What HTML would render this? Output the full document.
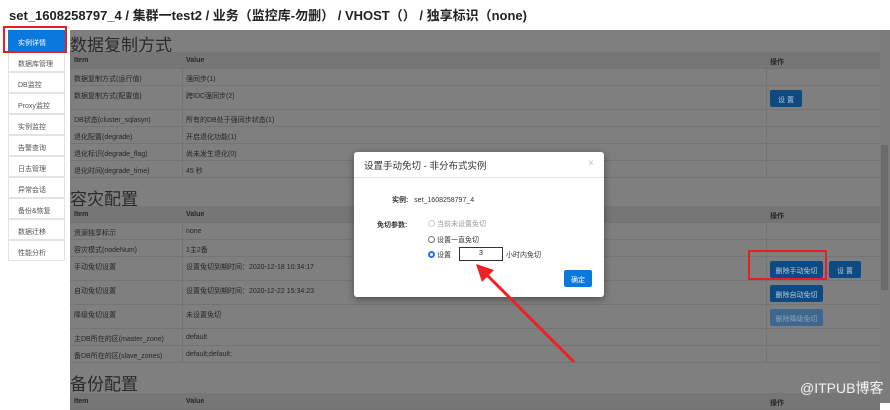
<!DOCTYPE html><html><head><meta charset="utf-8"><style>
*{margin:0;padding:0;box-sizing:border-box}
body{width:890px;height:403px;overflow:hidden;background:#fff;font-family:"Liberation Sans","Noto Sans CJK SC",sans-serif;position:relative;color:#222}
.a{position:absolute}
.t{font-size:13px;font-weight:bold;left:9px;top:5px;color:#222}
.side div{position:absolute;left:8px;width:57px;height:21px;border:1px solid #e3e3e3;background:#fff;font-size:7px;color:#555;padding:7px 0 0 9px}
.main{left:70px;top:30px;width:810px;height:373px;background:#7f7f7f}
.h{font-size:17px;color:#2a2a2a;left:0}
.row{position:absolute;left:0;width:810px;border-bottom:1px solid #747474;font-size:7px;color:#262626}
.row span{position:absolute;top:5px}
.row .c1{left:4px}.row .c2{left:116px}.row .c3{left:700px}
.vl{position:absolute;top:0;bottom:0;width:1px;background:#747474}
.hd{background:#767676;font-weight:bold}
.btn{position:absolute;background:#0e4a82;color:#bcc8d6;font-size:7px;text-align:center;border-radius:2px;height:17px;padding-top:5px}
.sb{left:880px;top:30px;width:10px;height:373px;background:#7c7c7c}
</style></head><body>
<div class="a t">set_1608258797_4 / 集群一test2 / 业务（监控库-勿删） / VHOST（） / 独享标识（none)</div>
<div class="side">
<div style="top:30px;background:#0a78dd;color:#fff;border-color:#0a78dd">实例详情</div>
<div style="top:51px">数据库管理</div><div style="top:72px">DB监控</div><div style="top:93px">Proxy监控</div><div style="top:114px">实例监控</div><div style="top:135px">告警查询</div><div style="top:156px">日志管理</div><div style="top:177px">异常会话</div><div style="top:198px">备份&amp;恢复</div><div style="top:219px">数据迁移</div><div style="top:240px">性能分析</div>
</div>
<div class="a" style="left:3px;top:26px;width:64px;height:27px;border:2px solid #e62020"></div>
<div class="a main">
<div class="a h" style="top:1px">数据复制方式</div>
<div class="row hd" style="top:22px;height:17px"><span class="c1">Item</span><span class="c2">Value</span><span class="c3">操作</span></div>
<div class="row" style="top:39px;height:17px"><span class="c1">数据复制方式(运行值)</span><span class="c2">强同步(1)</span></div>
<div class="row" style="top:56px;height:24px"><span class="c1">数据复制方式(配置值)</span><span class="c2">跨IDC强同步(2)</span></div>
<div class="row" style="top:80px;height:17px"><span class="c1">DB状态(cluster_sqlasyn)</span><span class="c2">所有的DB处于强同步状态(1)</span></div>
<div class="row" style="top:97px;height:17px"><span class="c1">退化配置(degrade)</span><span class="c2">开启退化功能(1)</span></div>
<div class="row" style="top:114px;height:17px"><span class="c1">退化标识(degrade_flag)</span><span class="c2">尚未发生退化(0)</span></div>
<div class="row" style="top:131px;height:17px"><span class="c1">退化时间(degrade_time)</span><span class="c2">45 秒</span></div>
<div class="vl" style="left:112px;top:22px;bottom:auto;height:126px"></div>
<div class="vl" style="left:696px;top:22px;bottom:auto;height:126px"></div>
<div class="btn" style="left:700px;top:60px;width:32px">设 置</div>
<div class="a h" style="top:155px">容灾配置</div>
<div class="row hd" style="top:176px;height:17px"><span class="c1">Item</span><span class="c2">Value</span><span class="c3">操作</span></div>
<div class="row" style="top:193px;height:17px"><span class="c1">资源独享标示</span><span class="c2">none</span></div>
<div class="row" style="top:210px;height:17px"><span class="c1">容灾模式(nodeNum)</span><span class="c2">1主2备</span></div>
<div class="row" style="top:227px;height:24px"><span class="c1">手动免切设置</span><span class="c2">设置免切到期时间：2020-12-18 10:34:17</span></div>
<div class="row" style="top:251px;height:24px"><span class="c1">自动免切设置</span><span class="c2">设置免切到期时间：2020-12-22 15:34:23</span></div>
<div class="row" style="top:275px;height:24px"><span class="c1">降级免切设置</span><span class="c2">未设置免切</span></div>
<div class="row" style="top:299px;height:17px"><span class="c1">主DB所在的区(master_zone)</span><span class="c2">default</span></div>
<div class="row" style="top:316px;height:17px"><span class="c1">备DB所在的区(slave_zones)</span><span class="c2">default;default;</span></div>
<div class="vl" style="left:112px;top:176px;bottom:auto;height:157px"></div>
<div class="vl" style="left:696px;top:176px;bottom:auto;height:157px"></div>
<div class="btn" style="left:700px;top:231px;width:53px">删除手动免切</div>
<div class="btn" style="left:759px;top:231px;width:32px">设 置</div>
<div class="btn" style="left:700px;top:255px;width:53px">删除自动免切</div>
<div class="btn" style="left:700px;top:279px;width:53px;background:#3e6790;color:#8fa3b8">删除降级免切</div>
<div class="a h" style="top:340px">备份配置</div>
<div class="row hd" style="top:363px;height:17px"><span class="c1">Item</span><span class="c2">Value</span><span class="c3">操作</span></div>
</div>
<div class="a sb"><div class="a" style="left:1px;top:115px;width:7px;height:145px;background:#6a6a6a"></div></div>
<div class="a" style="left:748px;top:250px;width:79px;height:30px;border:2px solid #e62020"></div>
<div class="a" style="left:354px;top:152px;width:250px;height:145px;background:#fff;border-radius:3px;box-shadow:0 2px 8px rgba(0,0,0,.4)">
<div class="a" style="left:0;top:0;width:250px;height:26px;border-bottom:1px solid #e5e5e5;font-size:9.5px;padding:6px 0 0 10px;color:#333">设置手动免切 - 非分布式实例</div>
<div class="a" style="left:234px;top:6px;font-size:10px;color:#bbb">×</div>
<div class="a" style="left:38px;top:43px;font-size:7px;color:#333"><b>实例:</b>&nbsp;&nbsp;&nbsp;set_1608258797_4</div>
<div class="a" style="left:23px;top:68px;font-size:7px;color:#333;font-weight:bold">免切参数:</div>
<div class="a" style="left:74px;top:67px;font-size:7px;color:#999"><span style="display:inline-block;width:7px;height:7px;border:1px solid #ccc;border-radius:50%;vertical-align:-1px"></span> 当前未设置免切</div>
<div class="a" style="left:74px;top:83px;font-size:7px;color:#333"><span style="display:inline-block;width:7px;height:7px;border:1px solid #777;border-radius:50%;vertical-align:-1px"></span> 设置一直免切</div>
<div class="a" style="left:74px;top:98px;font-size:7px;color:#333"><span style="display:inline-block;width:7px;height:7px;border:2px solid #1a73e8;border-radius:50%;vertical-align:-1px"></span> 设置</div>
<div class="a" style="left:105px;top:95px;width:44px;height:14px;border:1.5px solid #333;font-size:7px;text-align:center;padding-top:2px">3</div>
<div class="a" style="left:152px;top:98px;font-size:7px;color:#333">小时内免切</div>
<div class="a" style="left:210px;top:118px;width:28px;height:17px;background:#0a78dd;color:#fff;font-size:7px;text-align:center;padding-top:5px;border-radius:2px">确定</div>
</div>
<svg class="a" style="left:470px;top:258px" width="115" height="110"><line x1="104" y1="104" x2="14" y2="14" stroke="#ee2222" stroke-width="3"/><polygon points="6,6 24,12 12,24" fill="#ee2222"/></svg>
<div class="a" style="left:800px;top:378px;font-size:14px;color:#f2f2f2">@ITPUB博客</div>
</body></html>
